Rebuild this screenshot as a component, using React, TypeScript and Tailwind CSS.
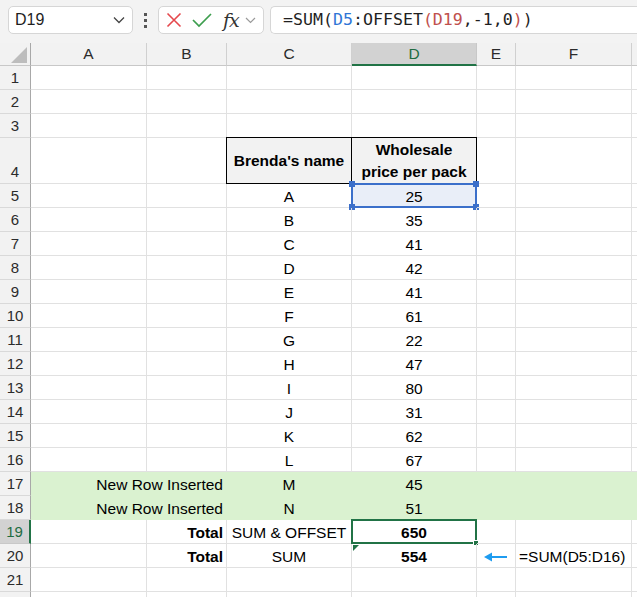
import React from "react";

const SANS = "font-['Liberation_Sans',Arial,sans-serif]";

type CellProps = {
  w: string;
  bc?: string;
  align?: string;
  className?: string;
  children?: React.ReactNode;
};

function Cell({ w, bc = "border-[#e1e1e1]", align = "items-end", className = "", children }: CellProps) {
  return (
    <div className={`relative shrink-0 ${w} border-r border-b ${bc} flex ${align} leading-[20px] ${className}`}>
      {children}
    </div>
  );
}

function RowHead({ n, selected = false, hideNum = false }: { n: number; selected?: boolean; hideNum?: boolean }) {
  if (selected) {
    return (
      <div className="w-[31px] shrink-0 bg-[#d2d2d2] border-r-2 border-r-[#217346] border-b border-b-[#c8c8c8] flex items-end justify-center pb-[2px] text-[15px] leading-[19px] text-[#1e6b41]">
        {n}
      </div>
    );
  }
  return (
    <div className="w-[31px] shrink-0 bg-[#f2f2f2] border-r border-r-[#a8a8a8] border-b border-b-[#d9d9d9] flex items-end justify-center pb-[2px] text-[15px] leading-[19px] text-[#2b2b2b]">
      {hideNum ? "" : n}
    </div>
  );
}

const WA = "w-[116px]";
const WB = "w-[80px]";
const WC = "w-[125px]";
const WD = "w-[125px]";
const WE = "w-[39px]";
const WF = "w-[116px]";

function PlainRow({
  n,
  c,
  d,
  green = false,
  a,
  hideNum = false,
}: {
  n: number;
  c?: string;
  d?: React.ReactNode;
  green?: boolean;
  a?: string;
  hideNum?: boolean;
}) {
  const bc = green ? "border-[#daf2d0]" : "border-[#e1e1e1]";
  const bg = green ? "bg-[#daf2d0]" : "";
  return (
    <div className="flex h-[24px]">
      <RowHead n={n} hideNum={hideNum} />
      <Cell w={WA} bc={bc} className={bg} />
      <Cell w={WB} bc={bc} className={`${bg} justify-end pr-[3px]`}>
        {a ? <span className="whitespace-nowrap">{a}</span> : null}
      </Cell>
      <Cell w={WC} bc={bc} className={`${bg} justify-center`}>
        {c}
      </Cell>
      <Cell w={WD} bc={bc} className={`${bg} justify-center`}>
        {d}
      </Cell>
      <Cell w={WE} bc={bc} className={bg} />
      <Cell w={WF} bc={bc} className={bg} />
      <div className={`flex-1 border-b ${bc} ${bg}`} />
    </div>
  );
}

function ColHead() {
  const cols: [string, string][] = [
    ["A", WA],
    ["B", WB],
    ["C", WC],
    ["D", WD],
    ["E", WE],
    ["F", WF],
  ];
  return (
    <div className="flex h-[23px] bg-[#f2f2f2]">
      <div className="relative w-[31px] shrink-0 border-r border-r-[#a8a8a8] border-b border-b-[#c8c8c8]">
        <svg className="absolute left-0 top-0" width="30" height="22" viewBox="0 0 30 22">
          <polygon points="11,20 27,20 27,4" fill="#bdbdbd" />
        </svg>
      </div>
      {cols.map(([l, w]) =>
        l === "D" ? (
          <div
            key={l}
            className={`shrink-0 ${w} bg-[#d2d2d2] border-r border-r-[#c8c8c8] border-b-2 border-b-[#217346] flex items-center justify-center text-[15.5px] text-[#1e6b41]`}
          >
            {l}
          </div>
        ) : (
          <div
            key={l}
            className={`shrink-0 ${w} border-r border-r-[#d0d0d0] border-b border-b-[#c8c8c8] flex items-center justify-center text-[15.5px] text-[#2b2b2b]`}
          >
            {l}
          </div>
        )
      )}
      <div className="flex-1 border-b border-b-[#c8c8c8]" />
    </div>
  );
}

function Toolbar() {
  return (
    <div className="flex h-[43px] items-start bg-[#f3f3f3] pt-[6px]">
      <div className="ml-[8px] flex h-[28px] w-[125px] items-center justify-between rounded-[5px] border border-[#d6d6d6] bg-white pl-[6px] pr-[7px] text-[16px] text-[#1f1f1f]">
        <span>D19</span>
        <svg width="12" height="8" viewBox="0 0 12 8">
          <path d="M1 1.5 L6 6.5 L11 1.5" fill="none" stroke="#444" strokeWidth="1.3" />
        </svg>
      </div>
      <div className="ml-[11px] mr-[11px] flex h-[28px] flex-col items-center justify-center gap-[3px]">
        <div className="h-[3px] w-[3px] bg-[#555]" />
        <div className="h-[3px] w-[3px] bg-[#555]" />
        <div className="h-[3px] w-[3px] bg-[#555]" />
      </div>
      <div className="flex h-[28px] w-[106px] items-center rounded-[5px] border border-[#d6d6d6] bg-white">
        <svg className="ml-[7px]" width="16" height="16" viewBox="0 0 16 16">
          <path d="M1.5 1.5 L14.5 14.5 M14.5 1.5 L1.5 14.5" stroke="#e5484d" strokeWidth="1.6" />
        </svg>
        <svg className="ml-[10px]" width="20" height="16" viewBox="0 0 20 16">
          <path d="M1 8 L7 14 L19 2" fill="none" stroke="#3d9e4e" strokeWidth="1.7" />
        </svg>
        <span className="ml-[11px] font-['DejaVu_Serif',serif] text-[19px] italic leading-[20px] tracking-[-1px] text-[#333]">fx</span>
        <svg className="ml-[6px]" width="11" height="7" viewBox="0 0 11 7">
          <path d="M1 1 L5.5 5.5 L10 1" fill="none" stroke="#9a9a9a" strokeWidth="1.2" />
        </svg>
      </div>
      <div className="ml-[6px] flex h-[28px] flex-1 items-center rounded-l-[5px] border border-r-0 border-[#d6d6d6] bg-white pl-[12px] font-['DejaVu_Sans_Mono',monospace] text-[16.6px] text-[#1f1f1f]">
        <span>=SUM(</span>
        <span className="text-[#2f75d6]">D5</span>
        <span>:OFFSET</span>
        <span className="text-[#c0504d]">(D19</span>
        <span>,-1,0</span>
        <span className="text-[#c0504d]">)</span>
        <span>)</span>
      </div>
    </div>
  );
}

export default function App() {
  const letters = "ABCDEFGHIJKL".split("");
  const vals = [25, 35, 41, 42, 41, 61, 22, 47, 80, 31, 62, 67];
  return (
    <div className={`h-[597px] w-[637px] overflow-hidden bg-white ${SANS} text-[15.5px] text-black`}>
      <Toolbar />
      <ColHead />
      <PlainRow n={1} />
      <PlainRow n={2} />
      <PlainRow n={3} />
      {/* Row 4 */}
      <div className="flex h-[46px]">
        <RowHead n={4} />
        <Cell w={WA} />
        <Cell w={WB} />
        <Cell w={WC} align="items-center" className="justify-center bg-[#f2f2f2] font-bold leading-[22px]">
          <div className="pointer-events-none absolute -left-px -top-px bottom-[-1px] right-[-1px] border border-black" />
          <span className="relative">Brenda's name</span>
        </Cell>
        <Cell w={WD} className="justify-center bg-[#f2f2f2] text-center font-bold leading-[22px]">
          <div className="pointer-events-none absolute -left-px -top-px bottom-[-1px] right-[-1px] border border-black" />
          <span className="relative">
            Wholesale
            <br />
            price per pack
          </span>
        </Cell>
        <Cell w={WE} />
        <Cell w={WF} />
        <div className="flex-1 border-b border-[#e1e1e1]" />
      </div>
      {/* Row 5 with highlighted D5 */}
      <div className="flex h-[24px]">
        <RowHead n={5} />
        <Cell w={WA} />
        <Cell w={WB} />
        <Cell w={WC} className="justify-center">A</Cell>
        <Cell w={WD} className="justify-center bg-[#e9eef8]">
          <div className="pointer-events-none absolute -inset-px border-2 border-[#3b6fca]" />
          <div className="absolute -left-[3px] -top-[3px] h-[6px] w-[6px] bg-[#3b6fca]" />
          <div className="absolute -right-[3px] -top-[3px] h-[6px] w-[6px] bg-[#3b6fca]" />
          <div className="absolute -left-[3px] -bottom-[3px] h-[6px] w-[6px] bg-[#3b6fca]" />
          <div className="absolute -right-[3px] -bottom-[3px] h-[6px] w-[6px] bg-[#3b6fca]" />
          <span className="relative">25</span>
        </Cell>
        <Cell w={WE} />
        <Cell w={WF} />
        <div className="flex-1 border-b border-[#e1e1e1]" />
      </div>
      {letters.slice(1).map((l, i) => (
        <PlainRow key={l} n={6 + i} c={l} d={String(vals[i + 1])} />
      ))}
      <PlainRow n={17} green a="New Row Inserted" c="M" d="45" />
      <PlainRow n={18} green a="New Row Inserted" c="N" d="51" />
      {/* Row 19 */}
      <div className="flex h-[24px]">
        <RowHead n={19} selected />
        <Cell w={WA} />
        <Cell w={WB} className="justify-end pr-[3px] font-bold">Total</Cell>
        <Cell w={WC} className="justify-center">SUM &amp; OFFSET</Cell>
        <Cell w={WD} className="justify-center font-bold">
          <div className="pointer-events-none absolute -inset-px border-2 border-[#217346]" />
          <div className="absolute -bottom-[3px] -right-[3px] h-[6px] w-[6px] border border-white bg-[#217346]" />
          <span>650</span>
        </Cell>
        <Cell w={WE} />
        <Cell w={WF} />
        <div className="flex-1 border-b border-[#e1e1e1]" />
      </div>
      {/* Row 20 */}
      <div className="flex h-[24px]">
        <RowHead n={20} />
        <Cell w={WA} />
        <Cell w={WB} className="justify-end pr-[3px] font-bold">Total</Cell>
        <Cell w={WC} className="justify-center">SUM</Cell>
        <Cell w={WD} className="justify-center font-bold">
          <svg className="absolute left-px top-px" width="6" height="6" viewBox="0 0 6 6">
            <polygon points="0,0 6,0 0,6" fill="#217346" />
          </svg>
          <span>554</span>
        </Cell>
        <Cell w={WE} align="items-center">
          <svg className="ml-[7px] mt-[3px]" width="23" height="10" viewBox="0 0 23 10">
            <polygon points="0,5 8,0.5 8,9.5" fill="#1e9cf0" />
            <rect x="7" y="4" width="16" height="2" fill="#1e9cf0" />
          </svg>
        </Cell>
        <Cell w={WF} className="pl-[3px]">=SUM(D5:D16)</Cell>
        <div className="flex-1 border-b border-[#e1e1e1]" />
      </div>
      <PlainRow n={21} />
      <PlainRow n={22} hideNum />
    </div>
  );
}
